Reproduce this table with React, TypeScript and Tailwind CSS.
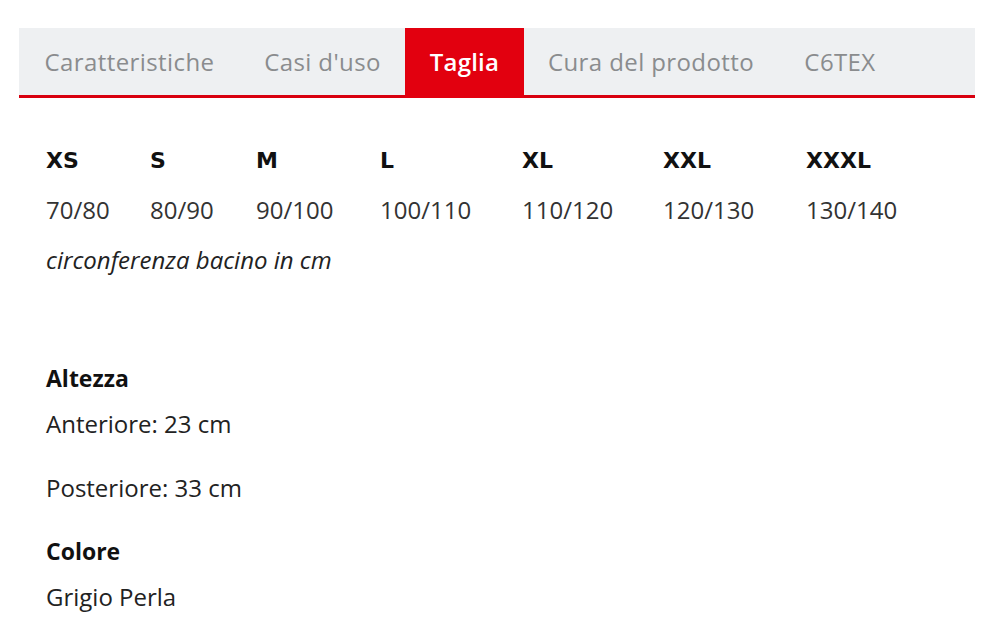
import React from "react";

const tabs = [
  { t: "Caratteristiche", w: "w-[221px]" },
  { t: "Casi d'uso", w: "w-[165px]" },
  { t: "Taglia", w: "w-[119px]" },
  { t: "Cura del prodotto", w: "w-[254px]" },
  { t: "C6TEX", w: "w-[124px]" },
];
const sizes = ["XS", "S", "M", "L", "XL", "XXL", "XXXL"];
const vals = ["70/80", "80/90", "90/100", "100/110", "110/120", "120/130", "130/140"];

export default function App() {
  return (
    <div className="w-[1000px] h-[635px] bg-white overflow-hidden" style={{ fontFamily: '"Open Sans", "Noto Sans", sans-serif' }}>
      <div className="pt-[28px] pl-[19px] w-[975px]">
        <div className="flex h-[70px] bg-[#eef0f2] border-b-[3px] border-[#d8000f]">
          <div className="flex h-full">
            {tabs.map(({ t, w }) => (
              <div
                key={t}
                className={
                  t === "Taglia"
                    ? `${w} flex items-center justify-center pb-[3px] bg-[#e2000f] text-white font-semibold text-[24px] tracking-[0.2px] h-[70px]`
                    : `${w} flex items-center justify-center text-[#8a8c8e] text-[24px] tracking-[0.4px] h-[67px]`
                }
              >
                {t}
              </div>
            ))}
          </div>
        </div>
      </div>
      <div className="pl-[46px] pt-[48px] text-[#222]">
        <div className="grid grid-cols-[104px_106px_124px_142px_141px_143px_150px]">
          {sizes.map((s) => (
            <div key={s} className="text-[22px] font-bold text-[#111] leading-[30px]" style={{ fontFamily: '"DejaVu Sans", sans-serif' }}>
              {s}
            </div>
          ))}
          {vals.map((v) => (
            <div key={v} className="text-[24px] leading-[30px] mt-[19px] text-[#333]">
              {v}
            </div>
          ))}
        </div>
        <div className="italic text-[24px] leading-[30px] mt-[20px] text-[#222]">circonferenza bacino in cm</div>
        <div className="mt-[88px] text-[23px] font-bold leading-[30px] text-[#111]">Altezza</div>
        <div className="mt-[16px] text-[24px] leading-[30px]">Anteriore: 23 cm</div>
        <div className="mt-[34px] text-[24px] leading-[30px]">Posteriore: 33 cm</div>
        <div className="mt-[33px] text-[23px] font-bold leading-[30px] text-[#111]">Colore</div>
        <div className="mt-[16px] text-[24px] leading-[30px]">Grigio Perla</div>
      </div>
    </div>
  );
}
